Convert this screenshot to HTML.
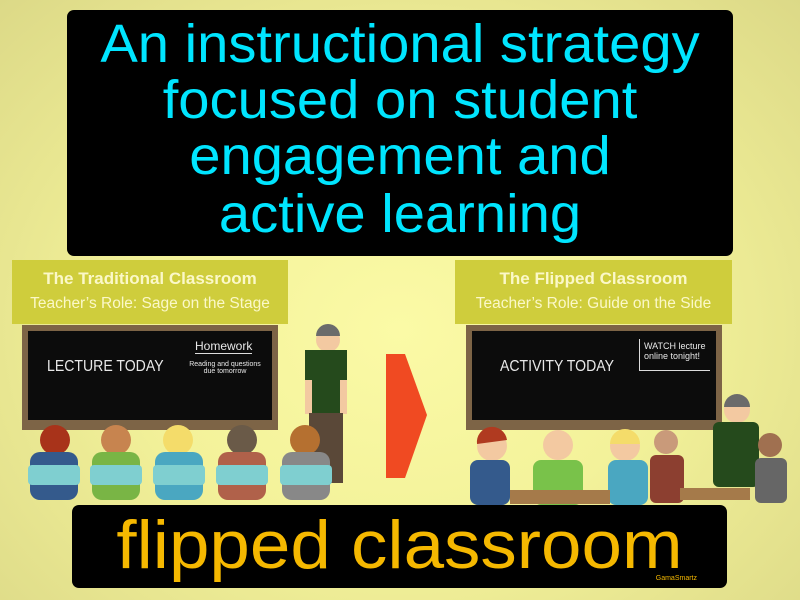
<!DOCTYPE html>
<html><head><meta charset="utf-8"><style>
*{margin:0;padding:0}
body{width:800px;height:600px;overflow:hidden;position:relative;background:radial-gradient(ellipse at 50% 55%,#fbfaa6 0%,#f3f29a 45%,#dcd987 100%);font-family:"Liberation Sans",sans-serif}
.box{position:absolute;background:#000;border-radius:7px}
.t1{left:67px;top:10px;width:666px;height:246px}
.t1 div{position:absolute;left:0;width:666px;text-align:center;color:#00e5ff;font-size:54px;line-height:56px;transform:scaleX(1.04);transform-origin:center;white-space:nowrap}
.t2{left:72px;top:505px;width:655px;height:83px}
.t2 div{position:absolute;left:0;top:4px;width:655px;text-align:center;color:#f5b800;font-size:68px;line-height:72px;transform:scaleX(1.07);white-space:nowrap}
.panel{position:absolute;background:#cfcd3c;color:#fbf8c8;text-align:center;font-weight:bold}
.panel .a{font-size:17px;margin-top:9px}
.panel .b{font-size:15.5px;font-weight:normal;margin-top:6px}
.board{position:absolute;background:#7d6446;}
.board .in{position:absolute;left:6px;top:6px;right:6px;bottom:10px;background:#0c0c0c}
.chalk{position:absolute;color:#e8e8e8;white-space:nowrap;transform-origin:left top}
</style></head><body>
<div class="panel" style="left:12px;top:260px;width:276px;height:64px"><div class="a">The Traditional Classroom</div><div class="b">Teacher’s Role: Sage on the Stage</div></div>
<div class="panel" style="left:455px;top:260px;width:277px;height:64px"><div class="a">The Flipped Classroom</div><div class="b">Teacher’s Role: Guide on the Side</div></div>
<div class="board" style="left:22px;top:325px;width:256px;height:105px"><div class="in"></div>
<div class="chalk" style="left:25px;top:33px;font-size:16px;transform:scaleX(.88)">LECTURE TODAY</div>
<div class="chalk" style="left:173px;top:14px;font-size:12px;border-bottom:1px solid #ddd">Homework</div>
<div class="chalk" style="left:163px;top:36px;font-size:7px;text-align:center;width:80px">Reading and questions<br>due tomorrow</div></div>
<div class="board" style="left:466px;top:325px;width:256px;height:105px"><div class="in"></div>
<div class="chalk" style="left:34px;top:33px;font-size:16px;transform:scaleX(.88)">ACTIVITY TODAY</div>
<div class="chalk" style="left:173px;top:14px;font-size:9px;border-left:1px solid #ddd;border-bottom:1px solid #ddd;padding:2px 4px 9px">WATCH lecture<br>online tonight!</div></div>
<svg style="position:absolute;left:0;top:0" width="800" height="600">
<circle cx="328" cy="340" r="12" fill="#f3c9a1"/><path d="M316 336a12 12 0 0 1 24 0z" fill="#6b6b6b"/>
<rect x="305" y="350" width="42" height="63" fill="#254a1c"/><rect x="305" y="380" width="7" height="34" fill="#f3c9a1"/><rect x="340" y="380" width="7" height="34" fill="#f3c9a1"/>
<rect x="309" y="413" width="34" height="70" fill="#5a4838"/>
<path d="M386 354 L405 354 L427 415 L405 478 L386 478 Z" fill="#f04a22"/>
<g><circle cx="55" cy="440" r="15" fill="#a8331a"/><rect x="30" y="452" width="48" height="48" rx="10" fill="#345a8c"/><rect x="28" y="465" width="52" height="20" rx="4" fill="#7fcfd0"/></g>
<g><circle cx="116" cy="440" r="15" fill="#c7844f"/><rect x="92" y="452" width="48" height="48" rx="10" fill="#79b545"/><rect x="90" y="465" width="52" height="20" rx="4" fill="#7fcfd0"/></g>
<g><circle cx="178" cy="440" r="15" fill="#f4dc6a"/><rect x="155" y="452" width="48" height="48" rx="10" fill="#4aa7c1"/><rect x="153" y="465" width="52" height="20" rx="4" fill="#7fcfd0"/></g>
<g><circle cx="242" cy="440" r="15" fill="#6a5a48"/><rect x="218" y="452" width="48" height="48" rx="10" fill="#b0614a"/><rect x="216" y="465" width="52" height="20" rx="4" fill="#7fcfd0"/></g>
<g><circle cx="305" cy="440" r="15" fill="#b57030"/><rect x="282" y="452" width="48" height="48" rx="10" fill="#888"/><rect x="280" y="465" width="52" height="20" rx="4" fill="#7fcfd0"/></g>
<g><circle cx="492" cy="446" r="15" fill="#f3c9a1"/><path d="M477 444a15 15 0 0 1 30 -4z" fill="#b03a20"/><rect x="470" y="460" width="40" height="45" rx="8" fill="#345a8c"/></g>
<g><circle cx="558" cy="445" r="15" fill="#f3c9a1"/><rect x="533" y="460" width="50" height="45" rx="8" fill="#79c24a"/></g>
<g><circle cx="625" cy="446" r="15" fill="#f3c9a1"/><path d="M610 444a15 15 0 0 1 30 0z" fill="#f4dc6a"/><rect x="608" y="460" width="40" height="45" rx="8" fill="#4aa7c1"/></g>
<g><circle cx="666" cy="442" r="12" fill="#c99a7a"/><rect x="650" y="455" width="34" height="48" rx="6" fill="#8c3f30"/></g>
<g><circle cx="737" cy="410" r="13" fill="#f3c9a1"/><path d="M724 407a13 13 0 0 1 26 0z" fill="#6b6b6b"/><rect x="713" y="422" width="46" height="65" rx="6" fill="#254a1c"/></g>
<g><circle cx="770" cy="445" r="12" fill="#a07050"/><rect x="755" y="458" width="32" height="45" rx="6" fill="#666"/></g>
<rect x="510" y="490" width="100" height="14" fill="#a57a4a"/><rect x="680" y="488" width="70" height="12" fill="#a57a4a"/>
</svg>
<div class="box t1">
<div style="top:6px">An instructional strategy</div>
<div style="top:62px">focused on student</div>
<div style="top:118px">engagement and</div>
<div style="top:176px">active learning</div>
</div>
<div class="box t2"><div>flipped classroom</div>
<span style="position:absolute;right:30px;bottom:6px;color:#f5b800;font-size:7px">GamaSmartz</span></div>
</body></html>
